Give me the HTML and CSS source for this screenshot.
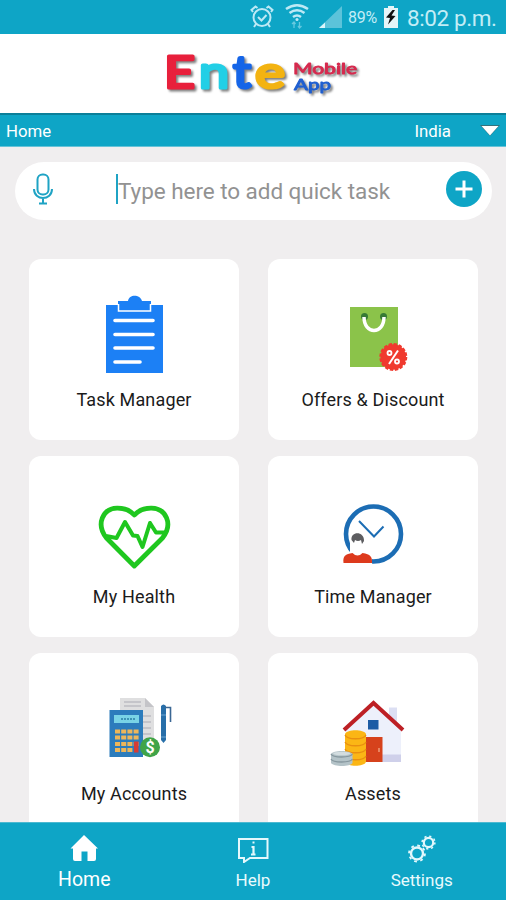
FILE: index.html
```
<!DOCTYPE html>
<html lang="en">
<head>
  <meta charset="UTF-8" />
  <meta name="viewport" content="width=device-width, initial-scale=1.0"/>
  <title>Ente Mobile App</title>
  <link rel="stylesheet" href="styles.css">
</head>
<body>

  <!-- Status bar -->
  <div class="status-bar">
    <svg class="status-icons" width="94" height="34" viewBox="0 0 94 34" fill="none" stroke="#bde9f5" stroke-width="2">
      <circle cx="14" cy="17.500" r="8.500"/>
      <path d="M10 17l3.500 3.500 5-5.500M5 12l-1.500-2 4-3.500 2 1.500M23 12l1.500-2-4-3.500-2 1.500M8 24l-2 3M20 24l2 3"/>
      <path d="M38 9q11-7.500 22 0M41.500 13q7.500-5.500 15 0M45 17q4-3 8 0" stroke-width="2.500"/>
      <circle cx="49" cy="19.500" r="1.500" fill="#bde9f5" stroke="none"/>
      <path d="M46 28v-6m-2 2l2-2 1.500 2M51.500 22v6m-1.500-2l1.500 2 2-2" stroke="#66c9e0" stroke-width="1.300"/>
      <path d="M71 28L94 6v22z" fill="#5cc3da" stroke="none"/>
      <path d="M71 28l6-5.500V28z" fill="#d9f5fb" stroke="none"/>
    </svg>
    <span class="percent">89%</span>
    <svg class="battery" width="14" height="22" viewBox="0 0 14 22">
      <path d="M4 0h6v2h4v20H0V2h4z" fill="#e6f5f8"/>
      <path d="M8.500 4L2 11.500l4 .5-2 6.500 7.500-8.500-4-.5L11 4z" fill="#111"/>
    </svg>
    <span class="clock">8:02 p.m.</span>
  </div>

  <!-- Logo -->
  <header>
    <svg class="logo" width="220" height="70" viewBox="0 0 220 70">
      <g class="logo-big">
        <text x="14" y="48" fill="#e8203c" stroke="#e8203c" textLength="31" lengthAdjust="spacingAndGlyphs">E</text>
        <text x="49" y="48" fill="#22cfe6" stroke="#22cfe6" textLength="30" lengthAdjust="spacingAndGlyphs">n</text>
        <text x="83" y="48" fill="#1565e8" stroke="#1565e8" textLength="18" lengthAdjust="spacingAndGlyphs">t</text>
        <text x="105" y="48" fill="#f3b311" stroke="#f3b311" textLength="30" lengthAdjust="spacingAndGlyphs">e</text>
      </g>
      <g class="logo-small">
        <text x="143" y="34" fill="#d62a4e" stroke="#d62a4e" textLength="64" lengthAdjust="spacingAndGlyphs">Mobile</text>
        <text x="144" y="50" fill="#1f5fd0" stroke="#1f5fd0" textLength="37" lengthAdjust="spacingAndGlyphs">App</text>
      </g>
    </svg>
  </header>

  <div class="title-bar">
    <span>Home</span>
    <span class="country">India</span>
    <svg width="20" height="13" viewBox="0 0 20 13">
      <path d="M0 1h20L10 12z" fill="#33717c"/>
      <path d="M1.500 2h17L10 11.500z" fill="#fff"/>
    </svg>
  </div>

  <main>
    <!-- Quick task -->
    <div class="search">
      <svg class="mic" width="20" height="32" viewBox="0 0 20 32" fill="none" stroke="#1fa3c4" stroke-width="2">
        <rect x="4.500" y="1.500" width="11" height="20" rx="5"/>
        <path d="M1 16c0 12 18 12 18 0M10 25v5M6 30.500h8"/>
      </svg>
      <span class="placeholder">Type here to add quick task</span>
      <button class="add">
        <svg width="36" height="36" viewBox="0 0 36 36" fill="none" stroke="#fff" stroke-width="3">
          <path d="M18 9.500v17M9.500 18h17"/>
        </svg>
      </button>
    </div>

    <!-- Menu -->
    <div class="grid">
      <div class="card">
        <svg width="100" height="90" viewBox="0 0 100 90">
          <path d="M22 12h57v68H22z" fill="#1c80f5"/>
          <path d="M34 17V8h10c1-7 12-7 14 0h9v9z" fill="#1c80f5"/>
          <path d="M34.500 11v7h32v-7" fill="none" stroke="#fff" stroke-width="1.500"/>
          <path d="M31 27.500h38M31 41.500h38M31 55h38M31 69h25" stroke="#fff" stroke-width="3.600" stroke-linecap="round"/>
        </svg>
        <p>Task Manager</p>
      </div>

      <div class="card">
        <svg width="100" height="90" viewBox="0 0 100 90">
          <path d="M27 14h48v60H27z" fill="#8bc34a"/>
          <circle cx="41.500" cy="23.500" r="3.500" fill="#377a35"/>
          <circle cx="60.500" cy="23.500" r="3.500" fill="#377a35"/>
          <path d="M41 24c0 18 20 18 20 0" fill="none" stroke="#fff" stroke-width="3.500"/>
          <circle cx="70.300" cy="64" r="12.800" fill="#f03a2e"/>
          <circle cx="70.300" cy="64" r="13" fill="none" stroke="#f03a2e" stroke-width="2" stroke-dasharray="3.400 1.700"/>
          <path d="M75 57.500L66 71" stroke="#fff" stroke-width="2"/>
          <circle cx="66.500" cy="60" r="2" fill="none" stroke="#fff" stroke-width="1.800"/>
          <circle cx="74" cy="68.500" r="2" fill="none" stroke="#fff" stroke-width="1.800"/>
        </svg>
        <p>Offers &amp; Discount</p>
      </div>

      <div class="card">
        <svg width="100" height="90" viewBox="0 0 100 90" fill="none" stroke="#1fc71f" stroke-width="4.800" stroke-linejoin="round">
          <path d="M50.300 76L22.500 48C11.500 34 19 18.500 33 18.200Q44 18 50.300 25Q57 18 67.500 18.200C82 18.500 89.500 34 78.500 48z"/>
          <path d="M22 46l10.500 2L41 32l8 13.500 4.500.5 5 11L66 33l6 9.500h11" stroke-width="4"/>
        </svg>
        <p>My Health</p>
      </div>

      <div class="card">
        <svg width="100" height="90" viewBox="0 0 100 90">
          <circle cx="50.500" cy="44" r="27.500" fill="#fff" stroke="#1c6db4" stroke-width="4.600"/>
          <path d="M36 31l15 15.500 9.500-10" fill="none" stroke="#1c6db4" stroke-width="2"/>
          <path d="M27 49q8-8 15 0l1 14 6 3v8H20v-12h7z" fill="#fff"/>
          <path d="M28.500 50c-1-9 13-9 12.500 1l-2 3-1-4q-3 2-6 0l-1 3z" fill="#5d5d60"/>
          <path d="M20.500 73c-1-7 2-9 9-10q5 5 10 0c8 1 10 4 9.500 10z" fill="#dd3a1d"/>
        </svg>
        <p>Time Manager</p>
      </div>

      <div class="card">
        <svg width="100" height="90" viewBox="0 0 100 90">
          <path d="M36 11h25l9 9v46H36z" fill="#dfdfe0"/>
          <path d="M61 11l9 9h-9z" fill="#c4c4c8"/>
          <path d="M40 15h17M40 19h17M59 29h8M59 35h8M59 41h8M59 47h8" stroke="#bdbdc2" stroke-width="1.500"/>
          <path d="M25.500 23h33.500v47H25.500z" fill="#2c7cbc"/>
          <path d="M30 28h25v8H30z" fill="#79d3e6"/>
          <path d="M37 32h14" stroke="#3d94b5" stroke-width="2" stroke-dasharray="2 1"/>
          <path d="M31 44.500h24M31 50.500h24M31 57h24M31 63h18" stroke="#edb65a" stroke-width="3.800" stroke-dasharray="5 1.200"/>
          <path d="M50 54.500h4.500v11H50z" fill="#d63b35"/>
          <path d="M77 19q2.500-3 5 0v34l-2.500 3-2.500-3z" fill="#286fa9"/>
          <path d="M81 20.500h5.500V35" fill="none" stroke="#3b6794" stroke-width="1.600"/>
          <path d="M77 28h5M77 50h5" stroke="#6aa5d1" stroke-width="1"/>
          <circle cx="66" cy="60.300" r="10" fill="#40a448"/>
          <text class="dollar" x="66" y="66" text-anchor="middle">$</text>
        </svg>
        <p>My Accounts</p>
      </div>

      <div class="card">
        <svg width="100" height="90" viewBox="0 0 100 90">
          <path d="M66 20.500h8V44h-8z" fill="#dcdff3"/>
          <path d="M50.500 16L78 41v34H23V41z" fill="#edf0fb"/>
          <path d="M59 67.500h19v7.500H59z" fill="#cfd0ea"/>
          <path d="M21 43l29.500-27L80 43" fill="none" stroke="#bd2025" stroke-width="4"/>
          <path d="M45 33h10.500v9.500H45z" fill="#1d5ba4"/>
          <path d="M43 50h16.500v25H43z" fill="#d6421c"/>
          <path d="M56 61v4" stroke="#f6b38f" stroke-width="1.200"/>
          <path d="M22 47c2-5 19-5 21 0v28c-2 5-19 5-21 0z" fill="#fbb615"/>
          <path d="M22 48c2 5 19 5 21 0M22 55c2 5 19 5 21 0M22 62c2 5 19 5 21 0M22 69c2 5 19 5 21 0" fill="none" stroke="#e98f10" stroke-width="1.300"/>
          <path d="M8 67c2-4 19-4 21.500 0v9c-2 4-19 4-21.500 0z" fill="#b4c3c8"/>
          <path d="M8 67c2 4 19 4 21.500 0M8 72c2 4 19 4 21.500 0" fill="none" stroke="#87989f" stroke-width="1.300"/>
          <ellipse cx="18.700" cy="66.500" rx="8.500" ry="1.800" fill="#d3dde0"/>
        </svg>
        <p>Assets</p>
      </div>
    </div>
  </main>

  <!-- Bottom navigation -->
  <nav>
    <a class="active">
      <svg width="28" height="28" viewBox="0 0 28 28">
        <path d="M14 0l14 13.500h-2V24q0 2-2 2h-6.500V16.500h-6V26H5q-2 0-2-2V13.500H.500z" fill="#fff"/>
      </svg>
      <span>Home</span>
    </a>
    <a>
      <svg width="32" height="28" viewBox="0 0 32 28" fill="none" stroke="#e4f8fc" stroke-width="2">
        <path d="M2 5h28.500v19H13l-6 4v-4H2z" transform="translate(0 -1)"/>
        <path d="M14.500 12h2v7.500" stroke-width="2.200"/>
        <path d="M15.500 7.500h2M14 19.500h4.500"/>
      </svg>
      <span>Help</span>
    </a>
    <a>
      <svg width="28" height="28" viewBox="0 0 28 28" fill="none" stroke="#e4f8fc">
        <circle cx="9" cy="18.500" r="6" stroke-width="2.400"/>
        <circle cx="9" cy="18.500" r="8" stroke-width="1.800" stroke-dasharray="2.800 3.480"/>
        <circle cx="20.500" cy="7.500" r="4.700" stroke-width="2.200"/>
        <circle cx="20.500" cy="7.500" r="6.400" stroke-width="1.500" stroke-dasharray="2.200 2.820"/>
      </svg>
      <span>Settings</span>
    </a>
  </nav>

</body>
</html>
```
FILE: styles.css
```
* { margin: 0; padding: 0; box-sizing: border-box; }
body {
  height: 900px; display: flex; flex-direction: column; overflow: hidden;
  background: #f0eeef; font-family: Roboto, "Liberation Sans", sans-serif;
}
svg { display: block; flex-shrink: 0; }

.status-bar {
  height: 34px; flex-shrink: 0; background: #0ea5c6; color: #c3edf6;
  display: flex; align-items: center; justify-content: flex-end; padding-right: 8px;
}
.status-icons { margin-right: 6px; }
.percent { width: 31px; font-size: 16px; letter-spacing: -0.2px; }
.battery { margin-left: 5px; }
.clock { margin-left: 9px; width: 91px; font-size: 22.5px; letter-spacing: -0.4px; white-space: nowrap; padding-top: 2px; }

header { height: 79px; flex-shrink: 0; background: #fff; padding: 6px 0 0 150px; }
.logo { filter: drop-shadow(2px 2px 1px rgba(0, 0, 0, 0.5)); }
.logo-big { font: 44px Lato, sans-serif; stroke-width: 3.2; stroke-linejoin: round; }
.logo-small { font: 16px Lato, sans-serif; stroke-width: 0.9; stroke-linejoin: round; }

.title-bar {
  height: 34px; flex-shrink: 0; background: #0ea5c6; color: #fff;
  border-top: 2px solid #0b7f99; border-bottom: 1px solid #65c3d8;
  display: flex; align-items: center; padding: 0 6px; font-size: 16.8px;
}
.country { margin-left: auto; margin-right: 29px; font-size: 16.8px; }

main { flex: 1; min-height: 0; overflow: hidden; padding: 15px 14px 0 15px; }

.search {
  height: 58px; border-radius: 29px; background: #fff;
  display: flex; align-items: center; padding: 0 10px 4px 18px;
}
.placeholder {
  margin-left: 63px; border-left: 2px solid #1fa3c4; height: 30px; line-height: 34px;
  font-size: 22.5px; letter-spacing: -0.05px; color: #929292; white-space: nowrap;
}
.add { margin-left: auto; width: 36px; height: 36px; border: none; border-radius: 50%; background: #0ea5c6; }

.grid {
  display: grid; grid-template-columns: 210px 210px; grid-auto-rows: 181px;
  gap: 16px 29px; padding: 39px 14px 0;
}
.card {
  background: #fff; border-radius: 12px; padding-top: 34px;
  display: flex; flex-direction: column; align-items: center;
}
.card p { margin-top: 5px; font-size: 18px; line-height: 24px; letter-spacing: 0.15px; color: #1b1b1b; }
.dollar { font: bold 16px Roboto, sans-serif; fill: #fff; }

nav {
  height: 78px; flex-shrink: 0; background: #0ea5c6; border-top: 1px solid #4cb9d1;
  display: grid; grid-template-columns: 1fr 1fr 1fr;
}
nav a { display: flex; flex-direction: column; align-items: center; padding-top: 12px; color: #e9fafd; }
nav span { margin-top: 5px; line-height: 24px; font-size: 17px; }
nav .active span { font-size: 19.5px; color: #fff; }
```
